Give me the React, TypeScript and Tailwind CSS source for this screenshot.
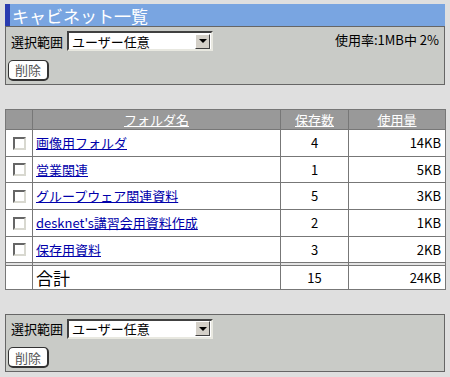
import React from "react";

const folders = [
  { name: "画像用フォルダ", count: 4, size: "14KB", h: "h-[27px]" },
  { name: "営業関連", count: 1, size: "5KB", h: "h-[26px]" },
  { name: "グループウェア関連資料", count: 5, size: "3KB", h: "h-[27px]" },
  { name: "desknet's講習会用資料作成", count: 2, size: "1KB", h: "h-[27px]" },
  { name: "保存用資料", count: 3, size: "2KB", h: "h-[26px]" },
];

const font = { fontFamily: '"Noto Sans CJK JP", "Liberation Sans", sans-serif' };

function FakeSelect() {
  return (
    <div className="flex items-center w-[146px] h-[20px] bg-white border-2 border-t-[#404040] border-l-[#404040] border-b-[#e8e8e0] border-r-[#e8e8e0]">
      <span className="flex-1 pl-[3px] text-[13px] leading-none text-black">ユーザー任意</span>
      <span className="w-[15px] h-[15px] mr-[1px] bg-[#d4d0c8] border border-t-white border-l-white border-b-[#404040] border-r-[#404040] flex items-center justify-center">
        <span className="w-0 h-0 border-l-[4px] border-r-[4px] border-t-[4px] border-l-transparent border-r-transparent border-t-black" />
      </span>
    </div>
  );
}

function DeleteButton() {
  return (
    <button className="w-[41px] h-[21px] rounded-[5px] bg-white border border-[#333] border-b-2 border-r-2 text-[13px] leading-none text-[#555]">
      削除
    </button>
  );
}

function Panel({ usage }: { usage?: boolean }) {
  return (
    <div className="border border-[#666] bg-[#c9cbc7] pt-[4px] pb-[3px] pl-[2px] pr-[5px]">
      <div className="flex items-center h-[20px]">
        <span className="ml-[3px] mr-[4px] text-[13px] text-black leading-none">選択範囲</span>
        <FakeSelect />
        {usage && (
          <span className="ml-auto -mt-[4px] text-[13px] text-black leading-none">使用率:1MB中 2%</span>
        )}
      </div>
      <div className="mt-[5px]">
        <DeleteButton />
      </div>
    </div>
  );
}

function Checkbox() {
  return (
    <span className="inline-block w-[13px] h-[13px] bg-white border-2 border-t-[#666] border-l-[#666] border-b-[#d8d8d0] border-r-[#d8d8d0] align-middle" />
  );
}

const cell = "border border-[#777] p-0";
// double rule above the total row
const totalCell = "border border-[#777] p-0 shadow-[inset_0_2px_0_#e4e4e4,inset_0_3px_0_#777]";

export default function App() {
  return (
    <div className="w-[450px] h-[377px] bg-[#dfdfdf] px-[5px] pt-[4px]" style={font}>
      {/* Title */}
      <div className="h-[22px] bg-[#79a5e1] border-l-[5px] border-[#2a3cb0] flex items-center pl-[2px]">
        <span className="text-white text-[17px] leading-none">キャビネット一覧</span>
      </div>

      <Panel usage />

      {/* Folder table */}
      <table className="mt-[24px] w-[440px] table-fixed border-collapse border border-[#777] bg-white text-[13px] leading-none">
        <colgroup>
          <col className="w-[27px]" />
          <col className="w-[248px]" />
          <col className="w-[68px]" />
          <col className="w-[97px]" />
        </colgroup>
        <thead>
          <tr className="h-[20px] bg-[#999]">
            <th className={cell} />
            <th className={`${cell} font-normal text-white underline`}>フォルダ名</th>
            <th className={`${cell} font-normal text-white underline`}>保存数</th>
            <th className={`${cell} font-normal text-white underline`}>使用量</th>
          </tr>
        </thead>
        <tbody>
          {folders.map((f) => (
            <tr key={f.name} className={f.h}>
              <td className={`${cell} text-center`}>
                <Checkbox />
              </td>
              <td className={`${cell} pl-[3px]`}>
                <a href="#" className="text-[#0000aa] underline">{f.name}</a>
              </td>
              <td className={`${cell} text-center text-black`}>{f.count}</td>
              <td className={`${cell} text-right pr-[4px] text-black`}>{f.size}</td>
            </tr>
          ))}
          <tr className="h-[27px]">
            <td className={totalCell} />
            <td className={`${totalCell} pl-[3px] pt-[3px] text-[17px] text-black`}>合計</td>
            <td className={`${totalCell} pt-[3px] text-center text-black`}>15</td>
            <td className={`${totalCell} pt-[3px] text-right pr-[4px] text-black`}>24KB</td>
          </tr>
        </tbody>
      </table>

      <div className="mt-[24px]">
        <Panel />
      </div>
    </div>
  );
}
